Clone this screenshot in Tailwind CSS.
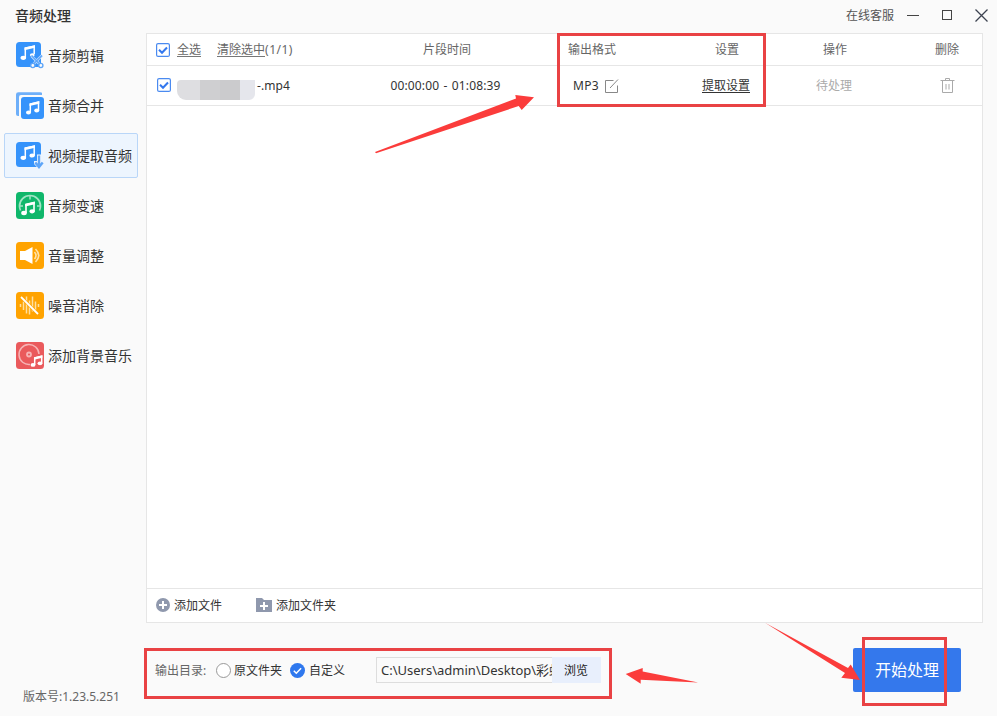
<!DOCTYPE html>
<html lang="zh-CN">
<head>
  <meta charset="UTF-8">
  <meta name="viewport" content="width=device-width, initial-scale=1.0">
  <title>音频处理</title>
  <script src="https://cdn.jsdelivr.net/npm/@tailwindcss/browser@4"></script>
</head>
<body class="bg-[#fafafa] font-['Noto_Sans','Noto_Sans_CJK_SC',sans-serif] text-[#333] text-[12px] leading-4">
  <div class="relative w-[997px] h-[716px] flex flex-col overflow-hidden">

    <!-- 标题栏 -->
    <header class="h-[33px] shrink-0 flex items-center justify-between pl-[15px] pr-[9px]">
      <h1 class="text-[14px] font-medium pb-0.5">音频处理</h1>
      <div class="flex items-center text-[#555] pb-0.5">
        <span class="mr-[13px]">在线客服</span>
        <svg class="mr-[23px]" width="12" height="12"><path d="M0 5.5h12" stroke="#444"/></svg>
        <svg class="mr-[22px]" width="11" height="11"><rect x=".5" y=".5" width="9" height="9" fill="none" stroke="#444"/></svg>
        <svg width="13" height="13"><path d="M.5.5l12 12M12.5.5l-12 12" stroke="#3d4350" stroke-width="1.3"/></svg>
      </div>
    </header>

    <div class="flex flex-1">
      <!-- 左侧菜单 -->
      <aside class="w-[146px] flex flex-col pl-1">
        <nav class="flex flex-col gap-[5px] w-[134px] text-[14px] leading-5">
          <a class="h-[45px] flex items-center gap-1 pl-3">
            <svg class="mb-px" width="28" height="28" viewBox="0 0 28 28" fill="none">
              <rect y="1" width="25" height="25" rx="3.5" fill="#3593fb"/>
              <path d="M9.3 17V7.2l8.9-2V13" stroke="#fff" stroke-width="1.5"/>
              <path d="M8.5 6.6l10.5-2.4v2.6l-10.5 2.4z" fill="#fff"/>
              <ellipse cx="7.3" cy="16.8" rx="2.8" ry="2.1" fill="#fff"/>
              <ellipse cx="16.3" cy="14" rx="2.4" ry="1.8" fill="#fff"/>
              <path d="M15.5 15l7.500 7.500M26 14.500l-8 8" stroke="#bfdcfd" stroke-width="2.600"/>
              <path d="M15.500 14.500l7.500 8M26 14.500l-8 8" stroke="#5da5f8" stroke-width="1.300"/>
              <circle cx="16.800" cy="24.500" r="2.100" fill="#fafafa" stroke="#5da5f8" stroke-width="1.400"/>
              <circle cx="24.800" cy="24.500" r="2.100" fill="#fafafa" stroke="#5da5f8" stroke-width="1.400"/>
            </svg>
            <span>音频剪辑</span>
          </a>
          <a class="h-[45px] flex items-center gap-1 pl-3">
            <svg class="mb-px" width="28" height="28" viewBox="0 -.5 28 28" fill="none">
              <path d="M26 1.500v2H5q-2 0-2 2v19H2q-2 0-2-2V3Q0 .8 2.500.8H24q2 0 2 .7z" fill="#6eaff9"/>
              <rect x="5" y="5.500" width="23" height="22" rx="3" fill="#3593fb"/>
              <path d="M14.300 21v-8.500l8.200-2V19" stroke="#fff" stroke-width="1.500"/>
              <path d="M13.500 12l9.800-2.300v2.500l-9.800 2.300z" fill="#fff"/>
              <ellipse cx="12.500" cy="21" rx="2.500" ry="1.900" fill="#fff"/>
              <ellipse cx="20.700" cy="19" rx="2.500" ry="1.900" fill="#fff"/>
            </svg>
            <span>音频合并</span>
          </a>
          <a class="h-[45px] flex items-center gap-1 pl-[11px] border border-[#b9d6f8] bg-[#edf5fe] rounded-xs">
            <svg class="mb-px" width="28" height="28" viewBox="0 0 28 28" fill="none">
              <rect y="1" width="25" height="25" rx="3.500" fill="#3593fb"/>
              <path d="M9.300 17V7.200l8.900-2V14.500" stroke="#fff" stroke-width="1.500"/>
              <path d="M8.500 6.600l10.500-2.400v2.600l-10.500 2.400z" fill="#fff"/>
              <ellipse cx="7.300" cy="16.800" rx="2.800" ry="2.100" fill="#fff"/>
              <ellipse cx="16.200" cy="14.500" rx="2.700" ry="2.100" fill="#fff"/>
              <path d="M21 13.500h4v6.500h3v8h-5L18 23v-3h3z" fill="#edf5fe"/>
              <path d="M23 14.500v11M19.300 21.500l3.700 4.500 3.700-4.500" stroke="#5da5f8" stroke-width="2.400"/>
            </svg>
            <span>视频提取音频</span>
          </a>
          <a class="h-[45px] flex items-center gap-1 pl-3">
            <svg class="mb-px" width="28" height="28" viewBox="0 -.5 28 28" fill="none">
              <rect y=".5" width="28" height="27" rx="3.500" fill="#0fb76b"/>
              <path d="M4.500 19A10.800 10.800 0 0 1 3.500 14.500A10.500 10.500 0 0 1 24.500 14.500A10.800 10.800 0 0 1 23.500 19" stroke="#a0e4c5" stroke-width="1.700"/>
              <path d="M14 4v4M3 14.500h4M21 14.500h4" stroke="#a0e4c5" stroke-width="1.500"/>
              <path d="M10 21.500v-8.300l8-2v8.300" stroke="#fff" stroke-width="1.600"/>
              <path d="M9.200 12.200l9.600-2.200v2.700l-9.600 2.200z" fill="#fff"/>
              <ellipse cx="8" cy="21.500" rx="2.800" ry="2.200" fill="#fff"/>
              <ellipse cx="16.200" cy="19.800" rx="2.700" ry="2.100" fill="#fff"/>
            </svg>
            <span>音频变速</span>
          </a>
          <a class="h-[45px] flex items-center gap-1 pl-3">
            <svg class="mb-px" width="28" height="28" viewBox="0 -.5 28 28" fill="none">
              <rect y=".5" width="28" height="27" rx="3.500" fill="#ffa300"/>
              <path d="M4 9.500h5l7.500-4v17l-7.500-4H4z" fill="#fff"/>
              <path d="M18.500 10.500q3 3.500 0 7M19.500 7.500q6.500 6.500 0 13" stroke="#ffe1a6" stroke-width="1.600"/>
            </svg>
            <span>音量调整</span>
          </a>
          <a class="h-[45px] flex items-center gap-1 pl-3">
            <svg class="mb-px" width="28" height="28" viewBox="0 -.5 28 28" fill="none">
              <rect y=".5" width="28" height="27" rx="3.500" fill="#ffa300"/>
              <path d="M4.500 12.500v3M7.500 10v8.500M10.500 5v17M13.500 9v14M16.500 5v15M19.500 10v9M22.500 12.500v3" stroke="#ffe0a0" stroke-width="1.500"/>
              <path d="M5 5.500l17 17" stroke="#ffa300" stroke-width="3"/>
              <path d="M5 5.500l17 17" stroke="#fff" stroke-width="1.800"/>
            </svg>
            <span>噪音消除</span>
          </a>
          <a class="h-[45px] flex items-center gap-1 pl-3">
            <svg class="mb-px" width="28" height="28" viewBox="0 -.5 28 28" fill="none">
              <rect y=".5" width="28" height="27" rx="3.500" fill="#ea5a5c"/>
              <path d="M14 23A10 10 0 1 1 23 12.500" stroke="#f6b4b5" stroke-width="1.500"/>
              <circle cx="13" cy="13" r="2" stroke="#f6b4b5" stroke-width="1.800"/>
              <path d="M18.700 23.500v-7l7-1.700v7" stroke="#fff" stroke-width="1.500"/>
              <path d="M18 15.800l8.400-2v2.500l-8.400 2z" fill="#fff"/>
              <ellipse cx="17" cy="23.400" rx="2.400" ry="1.900" fill="#fff"/>
              <ellipse cx="24" cy="21.800" rx="2.400" ry="1.900" fill="#fff"/>
            </svg>
            <span>添加背景音乐</span>
          </a>
        </nav>
        <div class="mt-auto mb-[11px] pl-[19px] text-[#666]">版本号:1.23.5.251</div>
      </aside>

      <main class="w-[837px] flex flex-col">
        <!-- 文件列表 -->
        <section class="h-[590px] flex flex-col bg-white border border-[#e6e6e6]">
          <div class="h-8 grid grid-cols-[207px_185px_130px_115px_128px_70px] items-center border-b border-[#e6e6e6] text-[#666]">
            <div class="flex items-center pl-[9px] pt-px">
              <svg class="mr-[7px]" width="14" height="14" viewBox="0 0 14 14" fill="none"><rect x=".6" y=".6" width="12.800" height="12.800" rx="1.500" stroke="#4a8af0" stroke-width="1.200"/><path d="M3 6.800l3 3 5-5.300" stroke="#3478ee" stroke-width="2"/></svg>
              <span class="border-b border-[#777] leading-[13px] mr-4">全选</span>
              <span class="border-b border-[#777] leading-[13px]">清除选中</span><span class="tracking-[.5px]">(1/1)</span>
            </div>
            <div class="text-center pl-px">片段时间</div>
            <div class="pl-[29px]">输出格式</div>
            <div class="text-center pl-px">设置</div>
            <div class="text-center pr-[26px]">操作</div>
            <div class="text-center">删除</div>
          </div>
          <div class="h-10 grid grid-cols-[207px_185px_130px_115px_128px_70px] items-center border-b border-[#e6e6e6]">
            <div class="flex items-center pl-[10px]">
              <svg class="mr-[6px] mb-px" width="14" height="14" viewBox="0 0 14 14" fill="none"><rect x=".6" y=".6" width="12.800" height="12.800" rx="1.500" stroke="#4a8af0" stroke-width="1.200"/><path d="M3 6.800l3 3 5-5.300" stroke="#3478ee" stroke-width="2"/></svg>
              <span class="flex w-[78px] h-5 mt-2 rounded-tl-[4px] rounded-bl-[9px] rounded-br-md overflow-hidden mr-[2px]">
                <i class="w-[23px] bg-[#dedee1]"></i><i class="w-[20px] bg-[#cfcfd1]"></i><i class="w-[20px] bg-[#cbcbcd]"></i><i class="flex-1 bg-[#e5e6ec]"></i>
              </span>
              <span class="tracking-[.1px]">-.mp4</span>
            </div>
            <div class="text-center pr-[2px] tracking-[.15px] [word-spacing:1px]">00:00:00 - 01:08:39</div>
            <div class="flex items-center pl-[34px] gap-[6px]">
              <span class="tracking-[.3px]">MP3</span>
              <svg width="14" height="14" viewBox="0 0 14 14" fill="none" stroke="#888"><path d="M8.500 1.500h-8v12h12v-7M5 9l8-8.500"/></svg>
            </div>
            <div class="text-center pr-px"><span class="inline-block border-b border-[#333] leading-[13px]">提取设置</span></div>
            <div class="text-center pr-[28px] text-[#aaa]">待处理</div>
            <svg class="mx-auto mb-px" width="15" height="16" viewBox="0 0 15 16" fill="none" stroke="#aaa"><path d="M.5 3.500h14M5.500 3V1.500h4V3M2.500 4v11.500h10V4M6 7v5.500M9 7v5.500"/></svg>
          </div>
          <div class="flex-1"></div>
          <div class="h-[34px] flex items-center border-t border-[#e6e6e6] pl-[9px]">
            <svg class="mr-[4px] mb-px" width="14" height="14" viewBox="0 0 14 14"><circle cx="7" cy="7" r="7" fill="#8f98ad"/><path d="M7 3v8M3 7h8" stroke="#fff" stroke-width="2"/></svg>
            <span class="mr-[34px]">添加文件</span>
            <svg class="mr-[4px] mb-px" width="16" height="14" viewBox="0 0 16 14"><path d="M0 0h6l2 2h8v12H0z" fill="#8f98ad"/><path d="M8 4v8M4 8h8" stroke="#fff" stroke-width="2"/></svg>
            <span>添加文件夹</span>
          </div>
        </section>

        <!-- 输出设置 -->
        <footer class="flex-1 flex items-start pt-[25px] pl-[9px]">
          <div class="flex items-center h-[44px]">
            <span class="text-[#666] w-[61px] pt-px">输出目录:</span>
            <i class="size-[15px] rounded-full border border-[#999] bg-white mr-[3px]"></i>
            <span class="mr-[8px] pt-px">原文件夹</span>
            <svg class="mr-[4px]" width="15" height="15" viewBox="0 0 15 15" fill="none"><circle cx="7.500" cy="7.500" r="7.500" fill="#2f78ee"/><path d="M3.800 7.700l2.500 2.500 4.800-5" stroke="#fff" stroke-width="1.500"/></svg>
            <span class="w-[67px] pt-px">自定义</span>
            <div class="w-[176px] h-[26px] border border-r-0 border-[#ddd] pl-1 flex items-center overflow-hidden whitespace-nowrap text-[13px]">C:\Users\admin\Desktop\彩虹</div>
            <button class="w-[49px] h-[26px] bg-[#e8effc] text-[#222] pt-px pr-px">浏览</button>
          </div>
          <button class="ml-auto mr-[22px] w-[108px] h-[44px] rounded-xs bg-[#3478ec] text-white text-[16px]">开始处理</button>
        </footer>
      </main>
    </div>

    <!-- 标注框和箭头 -->
    <svg class="absolute inset-0" width="997" height="716" fill="none">
      <g stroke="#e94244" stroke-width="3">
        <rect x="558.500" y="34.500" width="206" height="71"/>
        <rect x="145.500" y="649.500" width="465" height="48"/>
        <rect x="863.500" y="638.500" width="82" height="66"/>
      </g>
      <g fill="#fb3c3b">
        <path d="M375 152L516 98.500 515.300 95 534 97.300 521.700 110 518.700 106 376 153.300z"/>
        <path d="M625.700 674L642.700 668V671.500L698.300 682.600 640.700 679.700V683.700z"/>
        <path d="M765 622.700L848 668 850.700 664.500 860 680 841.300 677.700 845 673z"/>
      </g>
    </svg>
  </div>
</body>
</html>
